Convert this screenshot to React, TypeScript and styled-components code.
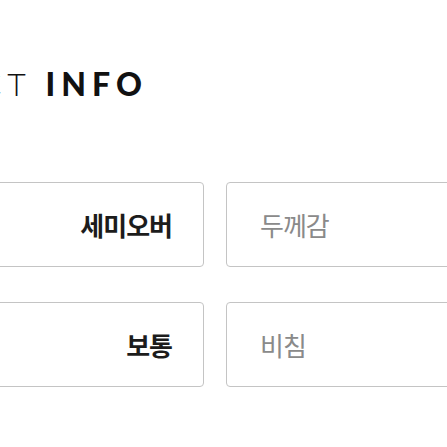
import React from 'react';
import styled, { createGlobalStyle } from 'styled-components';

const GlobalStyle = createGlobalStyle`
    html, body {
        margin: 0;
        padding: 0;
        background: #ffffff;
    }
    body {
        font-family: "Noto Sans CJK KR", "Noto Sans", sans-serif;
    }
`;

const Page = styled.div`
    width: 447px;
    height: 447px;
    overflow: hidden;
    background: #ffffff;
`;

const Section = styled.section`
    margin-left: -161px;
    padding-top: 64px;
`;

const Title = styled.h2`
    margin: 0;
    font-family: "Lato", "Liberation Sans", sans-serif;
    font-size: 32px;
    line-height: 40px;
    letter-spacing: 6px;
    color: #111111;
    white-space: nowrap;
`;

const Light = styled.span`
    font-weight: 300;
`;

const Bold = styled.span`
    font-weight: 900;
`;

const Grid = styled.div`
    margin-top: 78px;
    margin-left: 125px;
    display: grid;
    grid-template-columns: 240px 240px;
    column-gap: 22px;
    row-gap: 35px;
`;

const Field = styled.div<{ $align: 'left' | 'right' }>`
    box-sizing: border-box;
    height: 85px;
    border: 1px solid #c4c4c4;
    border-radius: 4px;
    display: flex;
    align-items: center;
    justify-content: ${p => (p.$align === 'right' ? 'flex-end' : 'flex-start')};
    padding: ${p => (p.$align === 'right' ? '0 31px 0 0' : '0 0 0 33px')};
`;

const Value = styled.span`
    font-size: 26px;
    font-weight: 700;
    letter-spacing: -1px;
    color: #1c1c1c;
`;

const Placeholder = styled.span`
    font-size: 26px;
    font-weight: 400;
    letter-spacing: -1px;
    color: #8a8a8a;
`;

const rows = [
    { value: '세미오버', label: '두께감' },
    { value: '보통', label: '비침' },
];

function App() {
    return (
        <Page lang="ko">
            <GlobalStyle />
            <Section>
                <Title>
                    <Light>PRODUCT </Light>
                    <Bold>INFO</Bold>
                </Title>
                <Grid>
                    {rows.map(row => (
                        <React.Fragment key={row.label}>
                            <Field $align="right">
                                <Value>{row.value}</Value>
                            </Field>
                            <Field $align="left">
                                <Placeholder>{row.label}</Placeholder>
                            </Field>
                        </React.Fragment>
                    ))}
                </Grid>
            </Section>
        </Page>
    );
}

export default App;
